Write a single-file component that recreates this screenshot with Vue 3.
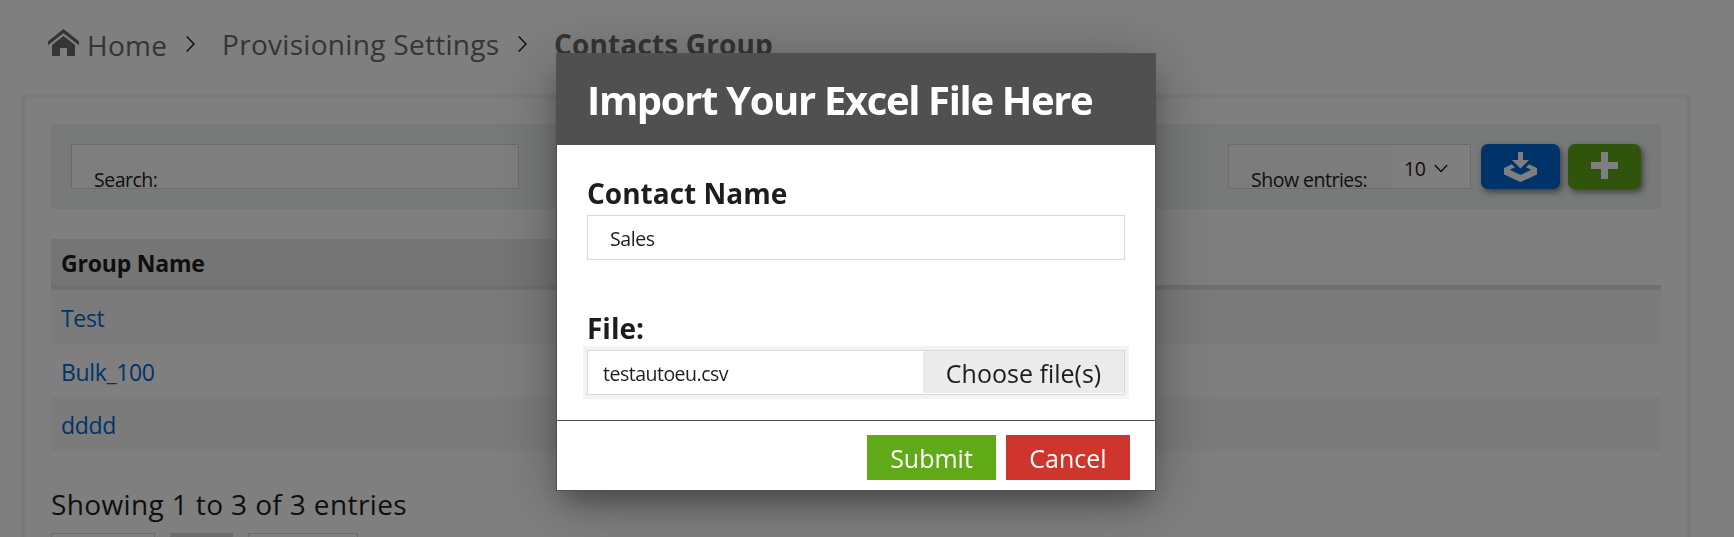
<script setup>
import { ref, reactive } from "vue";

const search = ref("");
const groups = reactive(["Test", "Bulk_100", "dddd"]);
const form = reactive({ name: "Sales", file: "testautoeu.csv" });
const showDialog = ref(true);

const closeDialog = () => {
    showDialog.value = false;
};
</script>

<template>
    <div class="page">
        <nav class="breadcrumbs">
            <a class="home">
                <svg width="31" height="27" viewBox="0 0 31 27">
                    <path d="M15.5 0 L31 12.2 V16.2 L15.5 4.2 L0 16.2 V12.2 Z" />
                    <path d="M15.5 7 L27 16 V27 H19 V19 H12 V27 H4 V16 Z" />
                </svg>
                <span>Home</span>
            </a>
            <svg class="arrow" width="9" height="16" viewBox="0 0 9 16"><path d="M0.7 0.5 L8 8 L0.7 15.5" /></svg>
            <a class="settings">Provisioning Settings</a>
            <svg class="arrow" width="9" height="16" viewBox="0 0 9 16"><path d="M0.7 0.5 L8 8 L0.7 15.5" /></svg>
            <a class="current">Contacts Group</a>
        </nav>

        <main class="panel">
            <div class="toolbar">
                <div class="field search">
                    <div class="prepend"><span>Search:</span></div>
                    <input v-model="search" />
                </div>
                <div class="tools">
                    <div class="field entries">
                        <div class="prepend"><span>Show entries:</span></div>
                        <div class="select">
                            <span>10</span>
                            <svg width="14" height="9" viewBox="0 0 14 9"><path d="M0.8 1 L7 7.6 L13.2 1" /></svg>
                        </div>
                    </div>
                    <button class="tool import">
                        <svg width="33" height="30" viewBox="0 0 33 30">
                            <path d="M14 0 H19 V8 H25 L16.5 16.5 L8 8 H14 Z" />
                            <path d="M7.8 12.3 L0 16 V22.5 L16.5 30 L33 22.5 V16 L25.2 12.3 L22 15.2 L27.2 17.8 L16.5 23 L5.8 17.8 L11 15.2 Z" />
                        </svg>
                    </button>
                    <button class="tool add">
                        <svg width="27" height="27" viewBox="0 0 27 27"><path d="M10 0 H17 V10 H27 V17 H17 V27 H10 V17 H0 V10 H10 Z" /></svg>
                    </button>
                </div>
            </div>

            <div class="table">
                <div class="thead">
                    <div class="th">Group Name</div>
                </div>
                <div class="tr" v-for="group in groups" :key="group">
                    <a>{{ group }}</a>
                </div>
            </div>

            <div class="info">Showing 1 to 3 of 3 entries</div>
            <div class="pagination">
                <div class="page-prev"></div>
                <div class="page-active"></div>
                <div class="page-next"></div>
            </div>
        </main>
    </div>

    <div class="overlay" v-if="showDialog">
        <div class="dialog">
            <div class="dialog-title">Import Your Excel File Here</div>
            <div class="dialog-content">
                <label class="name-label">Contact Name</label>
                <input class="name-input" v-model="form.name" />
                <label class="file-label">File:</label>
                <div class="file">
                    <span class="caption">{{ form.file }}</span>
                    <div class="choose">Choose file(s)</div>
                </div>
            </div>
            <div class="dialog-actions">
                <button class="btn submit">Submit</button>
                <button class="btn cancel" @click="closeDialog()">Cancel</button>
            </div>
        </div>
    </div>
</template>

<style>
body {
    background: #fff;
    overflow: hidden;
}
</style>

<style scoped>
.page,
.overlay,
input,
button {
    font-family: "Segoe UI", "Open Sans", "Noto Sans", sans-serif;
    color: #1d1d1d;
}
.page,
.page *,
.overlay,
.overlay * {
    box-sizing: border-box;
}
.page {
    height: 537px;
    overflow: hidden;
}
svg {
    display: block;
    flex: none;
}

/* breadcrumbs */
.breadcrumbs {
    display: flex;
    align-items: flex-start;
    height: 94px;
    padding: 24px 0 0 48px;
    font-size: 28px;
    line-height: 40px;
    color: #6a6a6a;
    white-space: nowrap;
}
.home {
    display: flex;
    width: 138px;
    fill: #6a6a6a;
    letter-spacing: 0.3px;
}
.home svg {
    margin-top: 5px;
}
.home span {
    margin: 1px 0 0 8px;
}
.arrow {
    margin-top: 12px;
    fill: none;
    stroke: #1d1d1d;
    stroke-width: 1.5;
}
.settings {
    width: 296px;
    margin-left: 27px;
    letter-spacing: 0.3px;
}
.current {
    margin-left: 27px;
    font-weight: bold;
    letter-spacing: 0.15px;
}

/* panel */
.panel {
    width: 1670px;
    height: 600px;
    margin-left: 21px;
    padding: 25px;
    border: 5px solid #f4f4f4;
}
.toolbar {
    display: flex;
    justify-content: space-between;
    height: 85px;
    padding: 20px;
    background: #f0f4f3;
}
.field {
    display: flex;
    height: 45px;
    background: #fff;
    border: 1px solid #d9d9d9;
    font-size: 19.5px;
    letter-spacing: -0.5px;
}
.search {
    width: 448px;
}
.prepend {
    width: 108px;
    height: 43px;
    padding: 27px 0 0 22px;
    background: #fcfcfc;
    line-height: 16px;
    white-space: nowrap;
}
.entries .prepend {
    width: 162px;
    background: #f8f8f8;
}
.search input {
    flex: 1;
    min-width: 0;
    border: none;
    outline: none;
    background: #fff;
}
.tools {
    display: flex;
}
.entries {
    width: 243px;
    margin-right: 10px;
}
.select {
    display: flex;
    align-items: center;
    padding: 4px 0 0 13px;
    gap: 9px;
}
.select svg {
    fill: none;
    stroke: #1d1d1d;
    stroke-width: 1.4;
}
.tool {
    display: flex;
    justify-content: center;
    height: 45px;
    padding: 8px 0 0;
    border: none;
    border-radius: 7px;
    box-shadow: 2px 3px 6px rgba(0, 0, 0, 0.5);
}
.tool svg {
    fill: #fff;
}
.import {
    width: 79px;
    margin-right: 8px;
    background: #0366d6;
}
.add {
    width: 73px;
    background: #60a917;
}

/* table */
.table {
    margin-top: 30px;
    font-size: 23px;
}
.thead {
    height: 51px;
    border-bottom: 5px solid #e0e0e0;
}
.th {
    width: 800px;
    height: 46px;
    padding-left: 10px;
    background: #ebebeb;
    font-weight: bold;
    line-height: 48px;
    letter-spacing: -0.2px;
}
.tr {
    height: 53.67px;
    padding-left: 10px;
    line-height: 56px;
    letter-spacing: -0.35px;
}
.tr:nth-child(even) {
    background: #f7f7f7;
}
.tr a {
    color: #0366d6;
}
.info {
    margin-top: 33px;
    font-size: 28px;
    line-height: 40px;
    letter-spacing: 0.38px;
}
.pagination {
    display: flex;
    gap: 15px;
    margin-top: 9px;
}
.pagination div {
    height: 40px;
    border: 1px solid #d9d9d9;
}
.page-prev {
    width: 104px;
}
.page-active {
    width: 63px;
    background: #d9d9d9;
}
.page-next {
    width: 110px;
}

/* dialog */
.overlay {
    position: fixed;
    inset: 0;
    display: flex;
    justify-content: center;
    align-items: flex-start;
    padding: 53px 22px 0 0;
    background: rgba(0, 0, 0, 0.5);
}
.dialog {
    width: 600px;
    height: 438px;
    background: #fff;
    border: 1px solid #505050;
    box-shadow: 0 16px 24px -6px rgba(0, 0, 0, 0.28), 0 10px 60px rgba(0, 0, 0, 0.3);
}
.dialog-title {
    height: 91px;
    padding-left: 30px;
    background: #505050;
    color: #fff;
    font-size: 40px;
    font-weight: bold;
    line-height: 91px;
    letter-spacing: -1.35px;
    white-space: nowrap;
}
.dialog-content {
    display: flex;
    flex-direction: column;
    height: 275px;
    padding: 28px 30px 0;
}
.name-label,
.file-label {
    height: 42px;
    font-size: 28px;
    font-weight: bold;
    line-height: 40px;
}
.file-label {
    margin-top: 48px;
}
.name-input {
    height: 45px;
    padding: 1px 22px 0;
    border: 1px solid #d9d9d9;
    outline: none;
    font-size: 19.5px;
    letter-spacing: -0.4px;
}
.file {
    display: flex;
    justify-content: space-between;
    height: 45px;
    border: 1px solid #d9d9d9;
    box-shadow: 0 0 0 4px #f3f3f3;
}
.caption {
    padding-left: 15px;
    font-size: 19.5px;
    line-height: 46px;
    letter-spacing: -0.5px;
}
.choose {
    width: 201px;
    height: 42px;
    background: #ebebeb;
    font-size: 25px;
    line-height: 44px;
    text-align: center;
    white-space: nowrap;
}
.dialog-actions {
    display: flex;
    justify-content: flex-end;
    gap: 10px;
    height: 70px;
    padding: 14px 25px 0 0;
    border-top: 1px solid #505050;
}
.btn {
    height: 45px;
    padding: 0;
    border: none;
    color: #fff;
    font-size: 25px;
}
.submit {
    width: 129px;
    background: #60a917;
}
.cancel {
    width: 124px;
    background: #ce352c;
}
</style>
